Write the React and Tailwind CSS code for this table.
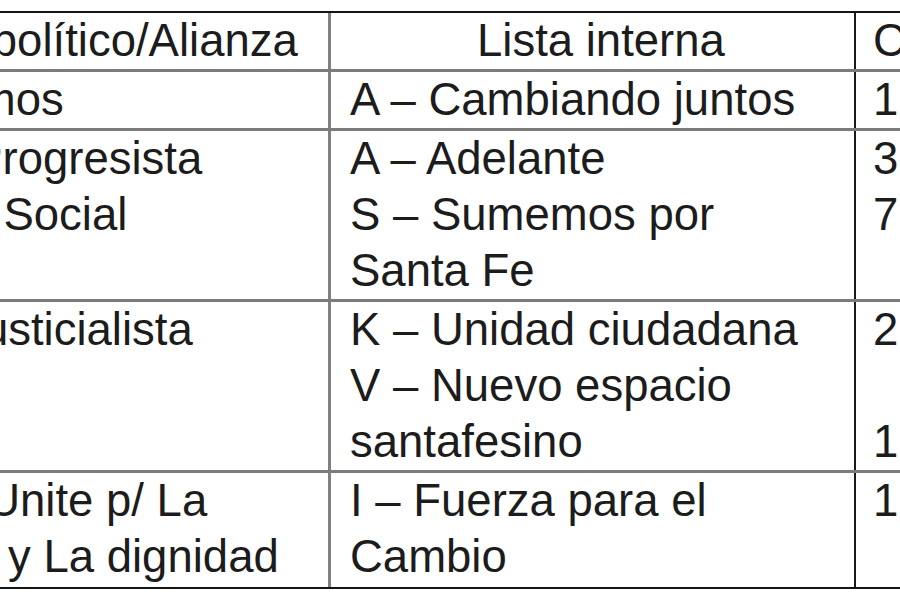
const rows = [
  {
    h: "h-[56px]",
    party: [["Cambiemos", "ml-[-4px]"]],
    list: ["A – Cambiando juntos"],
    nums: ["1"],
  },
  {
    h: "h-[168px]",
    party: [
      ["Frente Progresista", "pl-[3px]"],
      ["Cívico y Social", "pl-[4px]"],
    ],
    list: ["A – Adelante", "S – Sumemos por", "Santa Fe"],
    nums: ["3", "7", ""],
  },
  {
    h: "h-[168px]",
    party: [["Frente Justicialista", "ml-[-9px]"]],
    list: ["K – Unidad ciudadana", "V – Nuevo espacio", "santafesino"],
    nums: ["2", "", "1"],
  },
  {
    h: "h-[114px]",
    party: [
      ["Frente Unite p/ La", "pl-[18px]"],
      ["Libertad y La dignidad", "pl-[6px]"],
    ],
    list: ["I – Fuerza para el", "Cambio"],
    nums: ["1"],
  },
];

function Lines({ items }) {
  return items.map((t, i) => {
    const [text, cls] = Array.isArray(t) ? t : [t, ""];
    return (
      <div key={i} className={"h-[56px] whitespace-nowrap " + cls}>
        {text}
      </div>
    );
  });
}

export default function App() {
  return (
    <div
      className="w-[900px] h-[600px] overflow-hidden bg-white text-[#1c1c1c] text-[45.5px] leading-[56px]"
      style={{ fontFamily: '"Liberation Sans", Arial, sans-serif' }}
    >
      <div className="ml-[-193px] mt-[11px] w-[1320px] border-t-2 border-b-2 border-[#141414]">
        {/* header */}
        <div className="grid grid-cols-[524px_525px_271px] border-b-[3px] border-[#7c7c7c]">
          <div className="h-[56px] border-r-[3px] border-[#808080] pl-[28px] whitespace-nowrap">
            Partido político/Alianza
          </div>
          <div className="h-[56px] border-r-2 border-[#1a1a1a] pl-[146px] whitespace-nowrap">
            Lista interna
          </div>
          <div className="h-[56px] pl-[17px] whitespace-nowrap">Candidatos</div>
        </div>

        {rows.map((r, i) => (
          <div
            key={i}
            className={
              "grid grid-cols-[524px_525px_271px] " +
              (i < rows.length - 1 ? "border-b-[3px] border-[#7c7c7c]" : "")
            }
          >
            <div className={r.h + " border-r-[3px] border-[#808080] pl-[18px]"}>
              <Lines items={r.party} />
            </div>
            <div className={r.h + " border-r-2 border-[#1a1a1a] pl-[19px]"}>
              <Lines items={r.list} />
            </div>
            <div className={r.h + " pl-[17px]"}>
              <Lines items={r.nums} />
            </div>
          </div>
        ))}
      </div>
    </div>
  );
}
